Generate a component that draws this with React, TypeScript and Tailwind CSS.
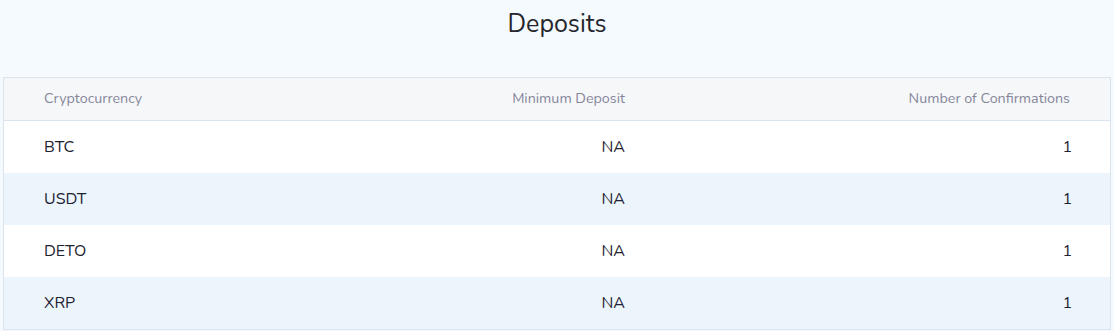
const rows = [
  { coin: 'BTC', min: 'NA', confirmations: 1 },
  { coin: 'USDT', min: 'NA', confirmations: 1 },
  { coin: 'DETO', min: 'NA', confirmations: 1 },
  { coin: 'XRP', min: 'NA', confirmations: 1 },
];

export default function App() {
  return (
    <div className="w-[1114px] h-[331px] bg-[#f5faff] font-['Nunito','Lato','Open_Sans',sans-serif] overflow-hidden">
      <h1 className="h-[49px] pt-[7px] text-center text-[25px] leading-[34px] text-[#25262b] font-normal">Deposits</h1>
      <div className="mx-[3px] mt-[28px] border border-[#dae3ee] bg-white">
        {/* Header */}
        <div className="grid grid-cols-[300px_361px_1fr] h-[43px] items-center bg-[#f6f7f9] border-b border-[#dae3ee] text-[14.3px] text-[#85869a]">
          <div className="pl-10">Cryptocurrency</div>
          <div className="pr-10 text-right">Minimum Deposit</div>
          <div className="pr-10 text-right">Number of Confirmations</div>
        </div>
        {rows.map((r, i) => (
          <div
            key={r.coin}
            className={`grid grid-cols-[300px_361px_1fr] h-[52px] items-center text-[16px] text-[#1d2230] ${i % 2 === 1 ? 'bg-[#ecf4fc]' : 'bg-white'}`}
          >
            <div className="pl-10">{r.coin}</div>
            <div className="pr-10 text-right">{r.min}</div>
            <div className="pr-[38px] text-right">{r.confirmations}</div>
          </div>
        ))}
      </div>
    </div>
  );
}
